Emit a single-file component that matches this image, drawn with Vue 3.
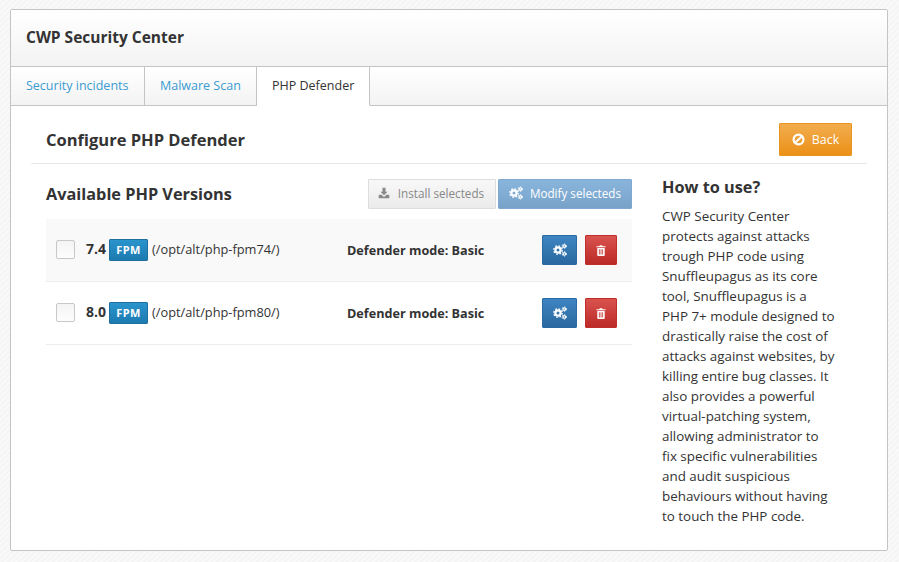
<script setup>
const versions = [
  { id: '7.4', path: '(/opt/alt/php-fpm74/)', mode: 'Basic' },
  { id: '8.0', path: '(/opt/alt/php-fpm80/)', mode: 'Basic' }
]
</script>

<template>
  <div class="page">
    <svg class="defs" width="0" height="0" aria-hidden="true">
      <symbol id="gears" viewBox="0 0 14 14">
        <g fill="none" stroke="#fff">
          <circle cx="5" cy="7" r="2.6" stroke-width="2.2" />
          <circle cx="5" cy="7" r="4.200" stroke-width="1.400" stroke-dasharray="1.650 1.650" />
          <circle cx="11.300" cy="3.100" r="1.300" stroke-width="1.200" />
          <circle cx="11.300" cy="3.100" r="2.200" stroke-width="1" stroke-dasharray="1.150 1.150" />
          <circle cx="11.300" cy="10.900" r="1.300" stroke-width="1.200" />
          <circle cx="11.300" cy="10.900" r="2.200" stroke-width="1" stroke-dasharray="1.150 1.150" />
        </g>
      </symbol>
    </svg>
    <section class="panel">
      <header class="panel-head"><h1>CWP Security Center</h1></header>
      <nav class="tabs">
        <a class="tab">Security incidents</a>
        <a class="tab">Malware Scan</a>
        <a class="tab active">PHP Defender</a>
      </nav>
      <div class="body">
        <div class="title-row">
          <h2>Configure PHP Defender</h2>
          <button class="btn back">
            <svg class="ico" width="13" height="13" viewBox="0 0 14 14">
              <circle cx="7" cy="7" r="5.3" fill="none" stroke="#fff" stroke-width="2.4" />
              <path d="M3.4 10.6l7.2-7.2" stroke="#fff" stroke-width="2.2" />
            </svg>
            Back
          </button>
        </div>
        <div class="columns">
          <div class="main">
            <div class="main-head">
              <h3>Available PHP Versions</h3>
              <div class="actions">
                <button class="btn install">
                  <svg class="ico" width="12" height="12" viewBox="0 0 14 14" fill="#8a8a8a">
                    <path d="M5.2 1h3.6v4.6h2.4L7 9.6 2.8 5.6h2.4z" />
                    <path d="M.8 9h3.4L7 11.6 9.8 9h3.4v4H.8z" />
                  </svg>
                  Install selecteds
                </button>
                <button class="btn modify">
                  <svg class="ico" width="14" height="14"><use href="#gears" /></svg>
                  Modify selecteds
                </button>
              </div>
            </div>
            <div v-for="(v, i) in versions" :key="v.id" class="row" :class="{ odd: i === 0 }">
              <span class="check"></span>
              <strong class="ver">{{ v.id }}</strong>
              <span class="label">FPM</span>
              <span class="path">{{ v.path }}</span>
              <strong class="mode">Defender mode: {{ v.mode }}</strong>
              <button class="btn square blue">
                <svg width="14" height="14"><use href="#gears" /></svg>
              </button>
              <button class="btn square red">
                <svg width="10" height="11" viewBox="0 0 11 12" fill="#fff">
                  <path d="M3.6 1.2 4.3.2h2.4l.7 1H10.500v1.300H.5V1.200z" />
                  <path fill-rule="evenodd" d="M1.400 3.200h8.200V11a1 1 0 0 1-1 1H2.400a1 1 0 0 1-1-1zM3.200 4.500v6h.9v-6zM5.050 4.500v6h.9v-6zM6.900 4.500v6h.9v-6z" />
                </svg>
              </button>
            </div>
          </div>
          <aside class="side">
            <h3>How to use?</h3>
            <p>CWP Security Center protects against attacks trough PHP code using Snuffleupagus as its core tool, Snuffleupagus is a PHP 7+ module designed to drastically raise the cost of attacks against websites, by killing entire bug classes. It also provides a powerful virtual-patching system, allowing administrator to fix specific vulnerabilities and audit suspicious behaviours without having to touch the PHP code.</p>
          </aside>
        </div>
      </div>
    </section>
  </div>
</template>

<style>
html, body { margin: 0; }
</style>

<style scoped>
.page {
  box-sizing: border-box;
  height: 562px;
  padding: 9px 10px 0;
  overflow: hidden;
  background: #f7f7f7 repeating-linear-gradient(135deg, #f9f9f9 0 2px, #f5f5f5 2px 4px);
  font-family: "Open Sans", "Noto Sans", sans-serif;
  font-size: 13px;
  color: #333;
}
.defs { display: block; }
.panel {
  box-sizing: border-box;
  width: 878px;
  height: 542px;
  background: #fff;
  border: 1px solid #c4c4c4;
  border-radius: 2px;
}
.panel-head {
  box-sizing: border-box;
  height: 57px;
  padding: 0 15px 2px;
  display: flex;
  align-items: center;
  background: linear-gradient(#fff, #f3f3f3);
  border-bottom: 1px solid #c4c4c4;
}
h1, h2, h3 { margin: 0; font-weight: 700; color: #333; }
h1 { font-size: 15.5px; }
.tabs {
  box-sizing: border-box;
  height: 39px;
  display: flex;
  background: linear-gradient(#fff, #f3f3f3);
  border-bottom: 1px solid #c4c4c4;
}
.tab {
  box-sizing: border-box;
  height: 39px;
  padding: 0 15px 2px;
  display: flex;
  align-items: center;
  white-space: nowrap;
  color: #3a9bd1;
  font-size: 12.5px;
  border-right: 1px solid #c4c4c4;
}
.tab.active { color: #333; background: #fff; border-bottom: 1px solid #fff; width: 113px; }
.tab:first-child { width: 134px; }
.tab:nth-child(2) { width: 112px; }
.body { padding: 17px 20px 0; }
.title-row {
  box-sizing: border-box;
  height: 41px;
  padding: 0 15px;
  display: flex;
  align-items: flex-start;
  justify-content: space-between;
  border-bottom: 1px solid #e8e8e8;
}
h2 { font-size: 16.5px; line-height: 33px; }
.btn {
  box-sizing: border-box;
  display: inline-flex;
  align-items: center;
  justify-content: center;
  gap: 7px;
  padding: 0;
  white-space: nowrap;
  font: 11.7px "Open Sans", "Noto Sans", sans-serif;
  border-radius: 1px;
  color: #fff;
}
.back {
  width: 73px;
  height: 33px;
  background: linear-gradient(#f2ad4e, #ec9017);
  border: 1px solid #e79520;
  font-size: 12.4px;
}
.columns { display: flex; padding-left: 15px; }
.main { width: 586px; }
.main-head {
  height: 55px;
  display: flex;
  justify-content: space-between;
  align-items: flex-start;
}
h3 { font-size: 16.3px; line-height: 22px; margin-top: 19px; }
.actions { display: flex; gap: 2px; margin-top: 15px; }
.install {
  width: 128px;
  height: 30px;
  gap: 8px;
  padding: 0 2px 2px 0;
  background: linear-gradient(#f8f8f8, #ebebeb);
  border: 1px solid #ddd;
  color: #888;
}
.modify {
  width: 134px;
  height: 30px;
  padding-bottom: 2px;
  background: linear-gradient(#89b5dd, #78a2c8);
  border: 1px solid #7ea8cf;
}
.row {
  box-sizing: border-box;
  height: 63px;
  padding: 0 15px 0 10px;
  display: flex;
  align-items: center;
  border-bottom: 1px solid #ececec;
}
.row.odd { background: #f9f9f9; }
.check {
  box-sizing: border-box;
  width: 19px;
  height: 19px;
  margin-top: -2px;
  border: 1px solid #c8c8c8;
  border-radius: 2px;
  background: linear-gradient(#f4f4f4, #fdfdfd);
}
.ver { margin-left: 11px; font-size: 14px; margin-top: -4px; }
.label {
  box-sizing: border-box;
  width: 39px;
  height: 22px;
  margin-left: 3px;
  padding-bottom: 2px;
  display: flex;
  align-items: center;
  justify-content: center;
  color: #fff;
  font-size: 11px;
  letter-spacing: 0.4px;
  font-weight: 700;
  background: linear-gradient(#2a94cc, #1c7bb1);
  border: 1px solid #1f6f9f;
  border-radius: 1px;
}
.path { margin-left: 4px; font-size: 12.8px; margin-top: -3px; width: 195px; white-space: nowrap; }
.mode { font-size: 12.65px; margin-right: auto; white-space: nowrap; }
.square { height: 30px; }
.blue {
  width: 35px;
  margin-right: 8px;
  background: linear-gradient(#3e85c2, #2a689f);
  border: 1px solid #2a6aa3;
}
.red {
  width: 32px;
  background: linear-gradient(#d9534f, #bb2a26);
  border: 1px solid #bf2e2a;
}
.side { margin-left: 30px; width: 173.6px; }
.side h3 { margin-top: 12px; }
.side p { margin: 8px 0 0; font-size: 13.4px; line-height: 20px; color: #333; }
.ico { flex: none; }
</style>
